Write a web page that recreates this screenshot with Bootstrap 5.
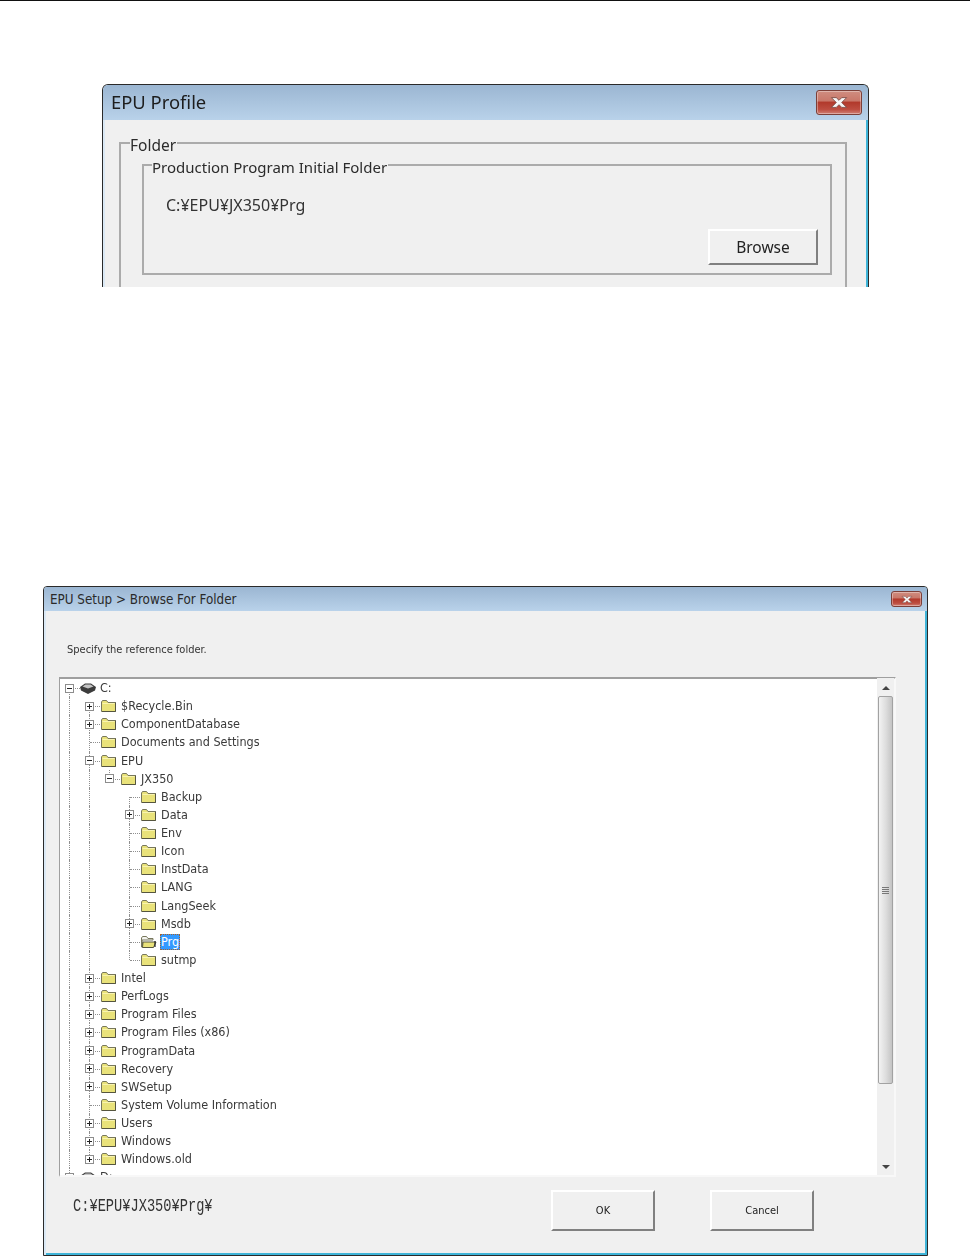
<!DOCTYPE html>
<html lang="en">
<head>
<meta charset="utf-8">
<title>EPU Setup</title>
<link href="https://cdn.jsdelivr.net/npm/bootstrap@5.3.0/dist/css/bootstrap.min.css" rel="stylesheet">
<style>
html,body{margin:0;background:#fff}
body{width:970px;height:1256px;overflow:hidden;font-family:"DejaVu Sans",sans-serif;color:#333}
.top-rule{height:1px;background:#111}
.win{background:#f0f0f0;border:1px solid #2a2a2a;border-bottom:0;border-radius:6px 6px 0 0;overflow:hidden;box-shadow:inset -2px 0 0 #3fb4d8,inset 2px 0 0 #dbe9f5;filter:blur(.35px)}
.win-a{margin:83px 102px 0 102px;width:767px;height:203px}
.win-b{margin:299px 0 0 43px;width:885px;height:670px;border-bottom:1px solid #2a2a2a;border-radius:4px 4px 0 0;box-shadow:inset -2px 0 0 #3fb4d8,inset 2px 0 0 #dbe9f5,inset 0 -2px 0 #3fb4d8}
.cap{background:linear-gradient(#9bb6d2,#b9d2ea)}
.cap-a{height:35px;padding:0 6px 2px 8px;font:18.4px "Noto Sans",sans-serif;color:#1d1d1d}
.cap-b{height:24px;padding:0 5px 0 6px;font:13.3px "DejaVu Sans Condensed","Noto Sans",sans-serif;color:#2a2a2a}
.closer{display:flex;align-items:center;justify-content:center;border:1px solid #7c3f38;border-radius:3px;background:linear-gradient(#cf8d80 0,#c9786a 42%,#b23a2c 50%,#bd4d40 80%,#d08075 100%);box-shadow:inset 0 0 0 1px rgba(255,255,255,.35)}
.closer-a{width:46px;height:25px;margin-top:2px}
.closer-b{width:31px;height:16px}
.gbox{border:2px solid #ababab;margin:0;padding:0;min-width:0}
.gbox legend{float:none;width:auto;margin:0;padding:4px 1px 0 0;font:15px/16px "Noto Sans",sans-serif;color:#2b2b2b}
.g-outer{margin:13px 21px 0 16px;height:200px;padding:0 13px 0 21px}
.g-outer>legend{margin-left:-12px;font-size:15.5px}
.g-inner{height:120px;margin-top:2px;padding:0 12px 0 22px}
.gbox.g-inner>legend{margin-left:-14px}
.path-a{font:16px/16px "Noto Sans",sans-serif;margin-top:22px;color:#333}
.wbtn{background:#f0f0f0;border-radius:0;border:2px solid;border-color:#fff #808080 #808080 #fff;color:#222;padding:0;display:flex;align-items:center;justify-content:center}
.wbtn-a{width:110px;height:36px;font:15.5px "Noto Sans",sans-serif;margin:16px 0 0 auto}
.wbtn-b{width:104px;height:41px;font:11px "DejaVu Sans Condensed","Noto Sans",sans-serif}
.wbtn-end{margin:0 113px 0 auto}
.hint{font:11px/1 "DejaVu Sans Condensed","Noto Sans",sans-serif;padding:33px 0 0 23px;color:#333}
.tree-wrap{margin:22px 0 0 15px;width:837px;height:500px;border:2px solid;border-left-width:1px;border-color:#9f9f9f #f8f8f8 #f8f8f8 #9f9f9f;background:#fff}
.tree{flex:1 1 auto;overflow:hidden}
.tr{display:flex;align-items:center;height:18.14px;font:12.5px/18px "DejaVu Sans Condensed","Noto Sans",sans-serif;color:#3a3a3a;white-space:nowrap}
.cn{width:20px;height:100%;flex:none;position:relative;display:flex;align-items:center;justify-content:center}
.v::before{content:"";position:absolute;left:9px;top:0;bottom:0;border-left:1px dotted #8f8f8f}
.h::before{content:"";position:absolute;left:9px;top:0;height:50%;border-left:1px dotted #8f8f8f}
.s::before{content:"";position:absolute;left:9px;top:50%;bottom:0;border-left:1px dotted #8f8f8f}
.b::after,.h::after{content:"";position:absolute;left:10px;right:0;top:50%;border-top:1px dotted #8f8f8f}
.bx{width:9px;height:9px;border:1px solid #8d8d8d;background:#fff;position:relative;z-index:1;display:block;margin-left:-1px}
.bx::before{content:"";position:absolute;left:1px;right:1px;top:3px;height:1px;background:#222}
.plus::after{content:"";position:absolute;top:1px;bottom:1px;left:3px;width:1px;background:#222}
.ico{flex:none;display:block;margin-right:4px}
.ico-d{margin-left:-1px;margin-right:3px}
.pick{background:#3399ff;color:#fff;outline:1px dotted #a8622a;outline-offset:-1px;height:16px;line-height:16px;padding:0 1px;margin-left:-1px}
.sbar{width:17px;flex:none;background:#f0f0f0;margin:-1px 0 0 0;padding-top:2px}
.arw{height:16px;display:flex;align-items:center;justify-content:center}
.thumb{height:388px;margin:0 1px;border:1px solid #a2a2a2;border-radius:2px;background:linear-gradient(90deg,#f3f3f3,#dcdcdc 55%,#c4c4c4);display:flex;align-items:center;justify-content:center}
.grip{width:7px;height:7px;background:repeating-linear-gradient(#777 0 1px,transparent 1px 2px)}
.sp{flex:1 1 auto}
.foot{height:66px;padding:0 0 0 29px}
.path-b{font:18px/1 "Liberation Mono",monospace;color:#333;width:478px;margin-top:-8px;transform:scaleX(.76);transform-origin:0 50%;white-space:nowrap}
</style>
</head>
<body>
<svg width="0" height="0" class="d-block position-absolute" aria-hidden="true">
<symbol id="fd" viewBox="0 0 17 14"><path d="M1.5 3V12.5H15.5V3.5H8L6.5 1.5H2.5Z" fill="#e9e27a" stroke="#77775c"/><path d="M15.5 3.5V12.5H2" fill="none" stroke="#55553f"/><path d="M2.5 4.5H14.5" stroke="#f8f3b0"/></symbol>
<symbol id="fo" viewBox="0 0 17 14"><path d="M1.5 3V12H3L2 5H13V3.5H8L6.5 1.5H2.5Z" fill="#f4f4f0" stroke="#77775c"/><path d="M3 7H16L13.5 12.5H2.5Z" fill="#e9e27a" stroke="#55553f"/><path d="M15 6V12" stroke="#222" stroke-width="1.2"/></symbol>
<symbol id="dr" viewBox="0 0 18 13"><path d="M1 5L6 1.5H12L17 5L16 8.5L9 12L2 8.5Z" fill="#3c3c3c"/><path d="M3.5 4.5L6.5 2.5H11.5L14.5 4.5L9 6.5Z" fill="#c4c4c4"/></symbol>
<symbol id="xx" viewBox="0 0 20 12"><path d="M3 1.5H7.5L10 4L12.5 1.5H17L12.5 6L17 10.5H12.5L10 8L7.5 10.5H3L7.5 6Z" fill="#f6f6f6" stroke="#7a4a44" stroke-width=".8"/></symbol>
</svg>
<div class="top-rule"></div>

<section class="win win-a">
  <div class="cap cap-a d-flex align-items-center justify-content-between">
    <span>EPU Profile</span>
    <span class="closer closer-a"><svg width="22" height="13"><use href="#xx"/></svg></span>
  </div>
  <fieldset class="gbox g-outer">
    <legend>Folder</legend>
    <fieldset class="gbox g-inner">
      <legend>Production Program Initial Folder</legend>
      <div class="path-a">C:¥EPU¥JX350¥Prg</div>
      <button type="button" class="btn wbtn wbtn-a">Browse</button>
    </fieldset>
  </fieldset>
</section>

<section class="win win-b d-flex flex-column">
  <div class="cap cap-b d-flex align-items-center justify-content-between">
    <span>EPU Setup &gt; Browse For Folder</span>
    <span class="closer closer-b"><svg width="14" height="9"><use href="#xx"/></svg></span>
  </div>
  <div class="hint">Specify the reference folder.</div>
  <div class="tree-wrap d-flex">
    <div class="tree">
      <div class="tr"><span class="cn s b"><i class="bx"></i></span><svg class="ico ico-d" width="18" height="13"><use href="#dr"/></svg><span>C:</span></div>
      <div class="tr"><span class="cn v"></span><span class="cn s b"><i class="bx plus"></i></span><svg class="ico" width="17" height="14"><use href="#fd"/></svg><span>$Recycle.Bin</span></div>
      <div class="tr"><span class="cn v"></span><span class="cn v b"><i class="bx plus"></i></span><svg class="ico" width="17" height="14"><use href="#fd"/></svg><span>ComponentDatabase</span></div>
      <div class="tr"><span class="cn v"></span><span class="cn v b"></span><svg class="ico" width="17" height="14"><use href="#fd"/></svg><span>Documents and Settings</span></div>
      <div class="tr"><span class="cn v"></span><span class="cn v b"><i class="bx"></i></span><svg class="ico" width="17" height="14"><use href="#fd"/></svg><span>EPU</span></div>
      <div class="tr"><span class="cn v"></span><span class="cn v"></span><span class="cn h"><i class="bx"></i></span><svg class="ico" width="17" height="14"><use href="#fd"/></svg><span>JX350</span></div>
      <div class="tr"><span class="cn v"></span><span class="cn v"></span><span class="cn"></span><span class="cn s b"></span><svg class="ico" width="17" height="14"><use href="#fd"/></svg><span>Backup</span></div>
      <div class="tr"><span class="cn v"></span><span class="cn v"></span><span class="cn"></span><span class="cn v b"><i class="bx plus"></i></span><svg class="ico" width="17" height="14"><use href="#fd"/></svg><span>Data</span></div>
      <div class="tr"><span class="cn v"></span><span class="cn v"></span><span class="cn"></span><span class="cn v b"></span><svg class="ico" width="17" height="14"><use href="#fd"/></svg><span>Env</span></div>
      <div class="tr"><span class="cn v"></span><span class="cn v"></span><span class="cn"></span><span class="cn v b"></span><svg class="ico" width="17" height="14"><use href="#fd"/></svg><span>Icon</span></div>
      <div class="tr"><span class="cn v"></span><span class="cn v"></span><span class="cn"></span><span class="cn v b"></span><svg class="ico" width="17" height="14"><use href="#fd"/></svg><span>InstData</span></div>
      <div class="tr"><span class="cn v"></span><span class="cn v"></span><span class="cn"></span><span class="cn v b"></span><svg class="ico" width="17" height="14"><use href="#fd"/></svg><span>LANG</span></div>
      <div class="tr"><span class="cn v"></span><span class="cn v"></span><span class="cn"></span><span class="cn v b"></span><svg class="ico" width="17" height="14"><use href="#fd"/></svg><span>LangSeek</span></div>
      <div class="tr"><span class="cn v"></span><span class="cn v"></span><span class="cn"></span><span class="cn v b"><i class="bx plus"></i></span><svg class="ico" width="17" height="14"><use href="#fd"/></svg><span>Msdb</span></div>
      <div class="tr"><span class="cn v"></span><span class="cn v"></span><span class="cn"></span><span class="cn v b"></span><svg class="ico" width="17" height="14"><use href="#fo"/></svg><span class="pick">Prg</span></div>
      <div class="tr"><span class="cn v"></span><span class="cn v"></span><span class="cn"></span><span class="cn h"></span><svg class="ico" width="17" height="14"><use href="#fd"/></svg><span>sutmp</span></div>
      <div class="tr"><span class="cn v"></span><span class="cn v b"><i class="bx plus"></i></span><svg class="ico" width="17" height="14"><use href="#fd"/></svg><span>Intel</span></div>
      <div class="tr"><span class="cn v"></span><span class="cn v b"><i class="bx plus"></i></span><svg class="ico" width="17" height="14"><use href="#fd"/></svg><span>PerfLogs</span></div>
      <div class="tr"><span class="cn v"></span><span class="cn v b"><i class="bx plus"></i></span><svg class="ico" width="17" height="14"><use href="#fd"/></svg><span>Program Files</span></div>
      <div class="tr"><span class="cn v"></span><span class="cn v b"><i class="bx plus"></i></span><svg class="ico" width="17" height="14"><use href="#fd"/></svg><span>Program Files (x86)</span></div>
      <div class="tr"><span class="cn v"></span><span class="cn v b"><i class="bx plus"></i></span><svg class="ico" width="17" height="14"><use href="#fd"/></svg><span>ProgramData</span></div>
      <div class="tr"><span class="cn v"></span><span class="cn v b"><i class="bx plus"></i></span><svg class="ico" width="17" height="14"><use href="#fd"/></svg><span>Recovery</span></div>
      <div class="tr"><span class="cn v"></span><span class="cn v b"><i class="bx plus"></i></span><svg class="ico" width="17" height="14"><use href="#fd"/></svg><span>SWSetup</span></div>
      <div class="tr"><span class="cn v"></span><span class="cn v b"></span><svg class="ico" width="17" height="14"><use href="#fd"/></svg><span>System Volume Information</span></div>
      <div class="tr"><span class="cn v"></span><span class="cn v b"><i class="bx plus"></i></span><svg class="ico" width="17" height="14"><use href="#fd"/></svg><span>Users</span></div>
      <div class="tr"><span class="cn v"></span><span class="cn v b"><i class="bx plus"></i></span><svg class="ico" width="17" height="14"><use href="#fd"/></svg><span>Windows</span></div>
      <div class="tr"><span class="cn v"></span><span class="cn h"><i class="bx plus"></i></span><svg class="ico" width="17" height="14"><use href="#fd"/></svg><span>Windows.old</span></div>
      <div class="tr"><span class="cn h"><i class="bx plus"></i></span><svg class="ico ico-d" width="18" height="13"><use href="#dr"/></svg><span>D:</span></div>
    </div>
    <div class="sbar d-flex flex-column">
      <div class="arw"><svg width="8" height="4"><path d="M4 0L8 4H0Z" fill="#444"/></svg></div>
      <div class="thumb"><span class="grip"></span></div>
      <div class="sp"></div>
      <div class="arw"><svg width="8" height="4"><path d="M0 0H8L4 4Z" fill="#444"/></svg></div>
    </div>
  </div>
  <div class="foot d-flex align-items-center">
    <div class="path-b">C:¥EPU¥JX350¥Prg¥</div>
    <button type="button" class="btn wbtn wbtn-b">OK</button>
    <button type="button" class="btn wbtn wbtn-b wbtn-end">Cancel</button>
  </div>
</section>
<script src="https://cdn.jsdelivr.net/npm/bootstrap@5.3.0/dist/js/bootstrap.bundle.min.js"></script>
</body>
</html>
